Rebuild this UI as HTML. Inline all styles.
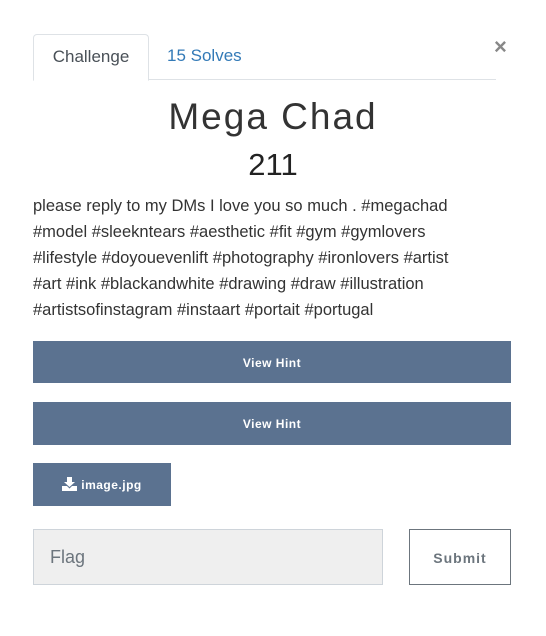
<!DOCTYPE html>
<html><head><style>
body{margin:0;width:546px;height:636px;background:#fff;font-family:"Liberation Sans",sans-serif;position:relative;overflow:hidden}
.a{position:absolute}
.tab{left:33px;top:34px;width:114px;height:45px;border:1px solid #dee2e6;border-bottom:1px solid #fff;border-radius:4px 4px 0 0;color:#495057;font-size:17px;text-align:center;line-height:44px;background:#fff;z-index:2}
.btn{background:#5b7290;color:#fff;font-weight:bold;font-size:12px;text-align:center;letter-spacing:.5px}
</style></head><body>
<div class="a" style="left:33px;top:79px;width:463px;height:1px;background:#dee2e6"></div>
<div class="a tab">Challenge</div>
<div class="a" style="left:167px;top:34px;line-height:44px;font-size:17px;color:#337ab7">15 Solves</div>
<div class="a" style="left:494px;top:34px;font-size:22px;color:#888;font-weight:bold">×</div>
<div class="a" style="left:0;width:546px;top:96px;text-align:center;font-size:37px;letter-spacing:2px;color:#333">Mega Chad</div>
<div class="a" style="left:0;width:546px;top:147px;text-align:center;font-size:31px;color:#222">211</div>
<div class="a" style="left:33px;top:193px;width:500px;font-size:16.5px;line-height:26px;color:#333;white-space:nowrap">please reply to my DMs I love you so much . #megachad<br>#model #sleekntears #aesthetic #fit #gym #gymlovers<br>#lifestyle #doyouevenlift #photography #ironlovers #artist<br>#art #ink #blackandwhite #drawing #draw #illustration<br>#artistsofinstagram #instaart #portait #portugal</div>
<div class="a btn" style="left:33px;top:341px;width:478px;height:42px;line-height:44px">View Hint</div>
<div class="a btn" style="left:33px;top:402px;width:478px;height:43px;line-height:45px">View Hint</div>
<div class="a btn" style="left:33px;top:463px;width:138px;height:43px;line-height:45px"><svg width="15" height="14" viewBox="0 0 15 14" style="vertical-align:-2px;margin-right:4px"><path d="M5 0h5v5h3l-5.5 5L2 5h3z" fill="#fff"/><path d="M0 9h5l2.5 2.5L10 9h5v5H0z" fill="#fff"/></svg>image.jpg</div>
<div class="a" style="left:33px;top:529px;width:348px;height:54px;border:1px solid #ced4da;background:#efefef;font-size:18px;color:#6c757d;line-height:54px;box-sizing:content-box"><span style="margin-left:16px">Flag</span></div>
<div class="a" style="left:409px;top:529px;width:100px;height:54px;border:1px solid #6c757d;text-align:center;line-height:56px;font-weight:bold;font-size:14px;color:#6c757d;letter-spacing:1px">Submit</div>
</body></html>
